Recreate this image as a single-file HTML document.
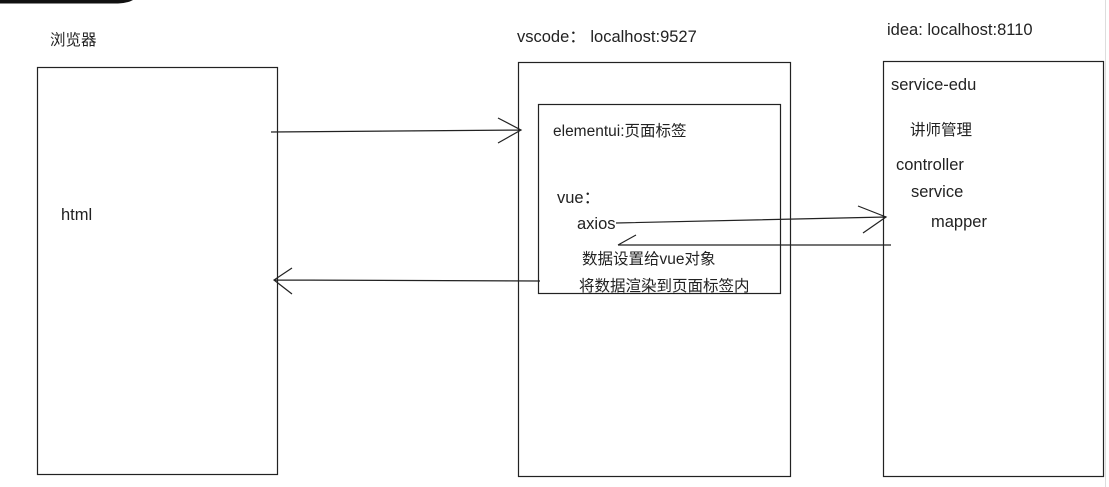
<!DOCTYPE html>
<html><head><meta charset="utf-8"><style>
html,body{margin:0;padding:0;background:#fff;width:1109px;height:487px;overflow:hidden}
svg text{font-family:"Liberation Sans","Noto Sans CJK SC",sans-serif;font-size:16.5px;fill:#222}
svg text.c{font-size:15.5px}
</style></head><body>
<svg width="1109" height="487" xmlns="http://www.w3.org/2000/svg">
<path d="M0 0 H133 Q128 3 118 3.5 H0 Z" fill="#111"/>
<line x1="1105.5" y1="0" x2="1105.5" y2="487" stroke="#ddd" stroke-width="1"/>
<g fill="none" stroke="#222" stroke-width="1.2">
<rect x="37.5" y="67.5" width="240" height="407"/>
<rect x="518.5" y="62.5" width="272" height="414"/>
<rect x="538.5" y="104.5" width="242" height="189"/>
<rect x="883.5" y="61.5" width="220" height="415"/>
<path d="M271 132 L521 130 M498 118 L521 130 L498 143"/>
<path d="M616 223 L886 217 M858 206 L886 217 L863 233"/>
<path d="M891 245 L618 245 M636 235 L618 245"/>
<path d="M540 281 L274 280 M292 268 L274 280 L292 294"/>
</g>
<text class="c" x="50" y="45">浏览器</text>
<text x="61" y="220">html</text>
<text x="517" y="42">vscode：  localhost:9527</text>
<text x="887" y="35">idea: localhost:8110</text>
<text class="c" x="553" y="136">elementui:页面标签</text>
<text x="557" y="203">vue：</text>
<text x="577" y="229">axios</text>
<text class="c" x="582" y="264">数据设置给vue对象</text>
<text class="c" x="579" y="291">将数据渲染到页面标签内</text>
<text x="891" y="90">service-edu</text>
<text class="c" x="910" y="135">讲师管理</text>
<text x="896" y="170">controller</text>
<text x="911" y="197">service</text>
<text x="931" y="227">mapper</text>
</svg>
</body></html>
